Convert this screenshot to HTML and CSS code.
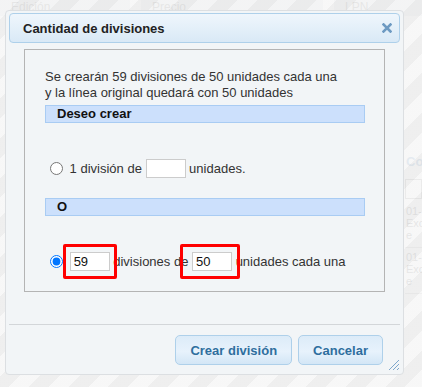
FILE: index.html
```html
<!DOCTYPE html>
<html lang="es">
<head>
    <meta charset="UTF-8">
    <meta name="viewport" content="width=device-width, initial-scale=1.0">
    <title>Cantidad de divisiones</title>
    <link rel="stylesheet" href="styles.css">
</head>
<body>
    <div class="page">
        <div class="page-head">
            <div class="head-cell">Edición</div>
            <div class="head-cell">Precio</div>
            <div class="head-cell">LPN</div>
        </div>
        <div class="page-side">
            <div class="side-title">Con</div>
            <div class="side-input"></div>
            <div class="side-row">01-<br>Exc<br>e</div>
            <div class="side-row">01-<br>Exc<br>e</div>
        </div>
    </div>
    <div class="overlay"></div>

    <div class="dialog">
        <div class="titlebar">
            <span class="title">Cantidad de divisiones</span>
            <svg class="close" width="10" height="10" viewBox="0 0 10 10">
                <path d="M1.5 1.5 L8.5 8.5 M8.5 1.5 L1.5 8.5" stroke="#6d9ac2" stroke-width="2.6" stroke-linecap="square"/>
            </svg>
        </div>
        <div class="content">
            <div class="box">
                <p class="intro">Se crearán 59 divisiones de 50 unidades cada una<br>y la línea original quedará con 50 unidades</p>
                <div class="band">Deseo crear</div>
                <label class="option"><input type="radio" name="modo"> 1 división de <input type="text" class="qty"> unidades.</label>
                <div class="band">O</div>
                <label class="option"><input type="radio" name="modo" checked> <span class="mark mark-a"><input type="text" class="qty" value="59"></span> divisiones de <span class="mark mark-b"><input type="text" class="qty" value="50"></span> unidades cada una</label>
            </div>
        </div>
        <div class="buttonpane">
            <button>Crear división</button>
            <button>Cancelar</button>
        </div>
        <svg class="grip" width="12" height="12" viewBox="0 0 12 12">
            <path d="M11 1 L1 11 M11 5 L5 11 M11 9 L9 11" stroke="#7ea7cc" stroke-width="1"/>
        </svg>
    </div>
</body>
</html>
```

FILE: styles.css
```css
body {
    margin: 0;
    width: 422px;
    height: 387px;
    overflow: hidden;
    position: relative;
    background: #fff;
    font-family: "Liberation Sans", Arial, sans-serif;
    font-size: 13px;
    color: #333;
}

/* faded page behind the modal */
.page { color: #888; }
.page-head {
    display: grid;
    grid-template-columns: 130px 182px 88px;
    gap: 11px;
}
.head-cell {
    background: #e4e8ec;
    padding: 0 2px 2px 11px;
    font-size: 12px;
    line-height: 14px;
}
.page-side {
    margin-left: 405px;
    padding-top: 132px;
    font-size: 11px;
    line-height: 12px;
}
.side-title { color: #7fa6cc; font-weight: bold; font-size: 13px; line-height: 16px; padding: 6px 0 9px 1px; }
.side-input { height: 18px; border: 1px solid #aaa; margin-bottom: 3px; background: #fff; }
.side-row { padding: 3px 0 6px 1px; border-bottom: 1px solid #ccc; }

.overlay {
    position: absolute;
    inset: 0;
    background: repeating-linear-gradient(135deg, rgba(246, 246, 246, 0.85) 0 14px, rgba(236, 236, 236, 0.85) 14px 28px);
}

/* dialog */
.dialog {
    position: absolute;
    left: 5px;
    top: 10px;
    width: 399px;
    height: 365px;
    box-sizing: border-box;
    padding: 2px 3px 3px;
    border: 1px solid #dcdfe2;
    border-radius: 4px;
    background: #f2f5f7;
    display: flex;
    flex-direction: column;
}
.titlebar {
    height: 30px;
    box-sizing: border-box;
    display: flex;
    align-items: center;
    justify-content: space-between;
    padding: 0 7px 0 13px;
    border: 1px solid #aed0ea;
    border-radius: 4px;
    background: linear-gradient(#eff6fc, #d9e9f6);
}
.title { font-weight: bold; font-size: 13px; color: #222; }

.content { padding: 6px 15px 32px; }
.box {
    border: 1px solid #b4b4b4;
    padding: 19px 19px 20px 20px;
}
.intro { margin: 0; line-height: 16px; }
.band {
    margin-top: 4px;
    height: 18px;
    box-sizing: border-box;
    padding-left: 11px;
    line-height: 16px;
    font-weight: bold;
    color: #111;
    background: #cce0fc;
    border: 1px solid #a9ccf3;
}
.band + .option { margin-top: 36px; }
.option + .band { margin-top: 20px; }
.option {
    display: block;
    height: 19px;
    line-height: 19px;
}
.option input[type="radio"] { margin: 0 3px 0 5px; vertical-align: -2px; }
.qty {
    width: 40px;
    height: 19px;
    box-sizing: border-box;
    border: 1px solid #ccc;
    padding: 0 3px;
    font-family: "Liberation Sans", Arial, sans-serif;
    font-size: 13px;
    color: #111;
    background: #fff;
    vertical-align: top;
}
.mark { position: relative; display: inline-block; vertical-align: top; }
.mark .qty { display: block; }
.mark::after {
    content: "";
    position: absolute;
    border: 3px solid #f00;
    border-radius: 2px;
    z-index: 1;
}
.mark-a::after { inset: -8px -7px -8px -7px; }
.mark-b::after { inset: -8px -8px -8px -12px; }

.buttonpane {
    border-top: 1px solid #d3d6d9;
    padding: 10px 17px 6px 0;
    display: flex;
    justify-content: flex-end;
    gap: 6px;
}
button {
    height: 30px;
    padding: 0 14px;
    border: 1px solid #aed0ea;
    border-radius: 5px;
    background: linear-gradient(#dcebf8 0%, #e7f2fc 55%, #d3e6f6 100%);
    color: #2e6e9e;
    font-family: "Liberation Sans", Arial, sans-serif;
    font-size: 13px;
    font-weight: bold;
    cursor: pointer;
}
.grip { position: absolute; right: 3px; bottom: 3px; }
```
